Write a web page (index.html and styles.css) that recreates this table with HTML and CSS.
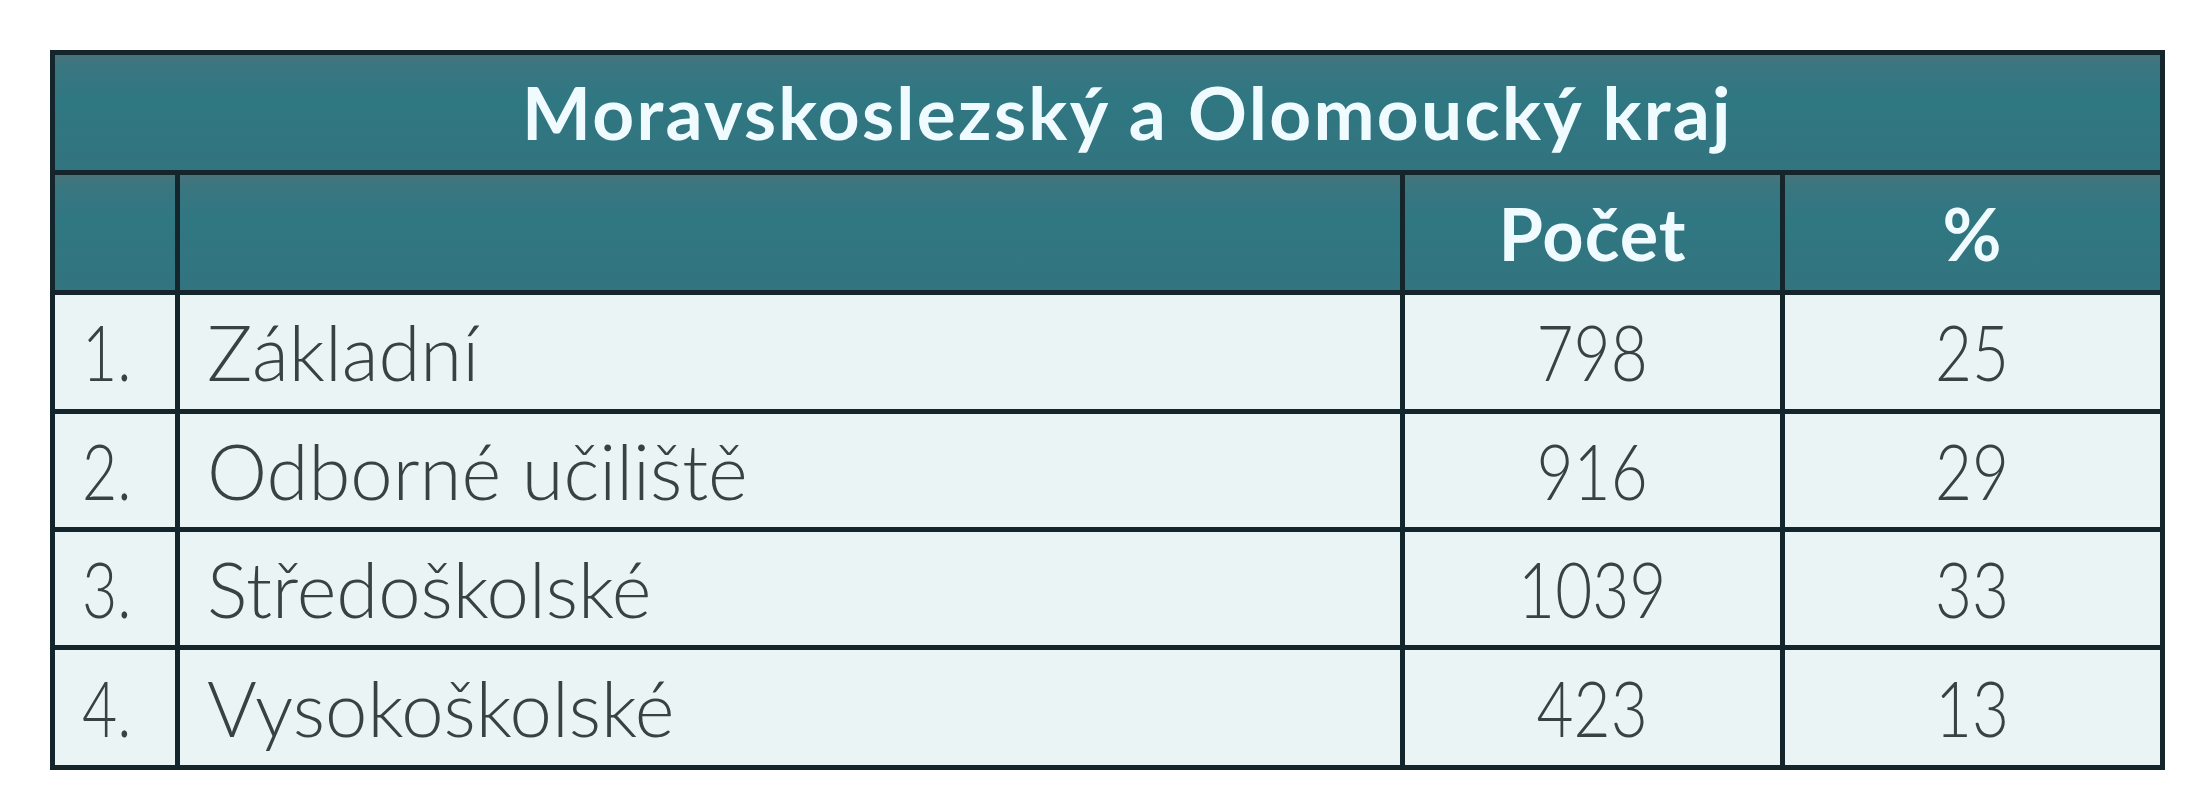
FILE: index.html
```html
<!DOCTYPE html>
<html lang="cs">
<head>
<meta charset="utf-8">
<title>Moravskoslezský a Olomoucký kraj</title>
<link rel="stylesheet" href="styles.css">
</head>
<body>
<div class="grid">
  <div class="cell head title">Moravskoslezský a Olomoucký kraj</div>
  <div class="cell head"></div>
  <div class="cell head"></div>
  <div class="cell head center">Počet</div>
  <div class="cell head center">%</div>

  <div class="cell"><span class="num idx">1.</span></div>
  <div class="cell">Základní</div>
  <div class="cell center"><span class="num">798</span></div>
  <div class="cell center"><span class="num">25</span></div>

  <div class="cell"><span class="num idx">2.</span></div>
  <div class="cell">Odborné učiliště</div>
  <div class="cell center"><span class="num">916</span></div>
  <div class="cell center"><span class="num">29</span></div>

  <div class="cell"><span class="num idx">3.</span></div>
  <div class="cell">Středoškolské</div>
  <div class="cell center"><span class="num">1039</span></div>
  <div class="cell center"><span class="num">33</span></div>

  <div class="cell"><span class="num idx">4.</span></div>
  <div class="cell">Vysokoškolské</div>
  <div class="cell center"><span class="num">423</span></div>
  <div class="cell center"><span class="num">13</span></div>
</div>
</body>
</html>
```

FILE: styles.css
```css
html, body {
  margin: 0;
  padding: 0;
  background: #ffffff;
}

body {
  padding: 50px 0 0 50px;
  font-family: "Lato", "Liberation Sans", sans-serif;
}

.grid {
  display: grid;
  grid-template-columns: 120px 1220px 375px 375px;
  grid-template-rows: 115px 115px 114px 113px 113px 115px;
  gap: 5px;
  padding: 5px;
  width: max-content;
  background: #14262c;
}

.cell {
  display: flex;
  align-items: center;
  padding-left: 27px;
  background: #ebf4f5;
  color: #384244;
  font-size: 76px;
  font-weight: 300;
  line-height: 1;
}

.cell.center {
  justify-content: center;
  padding-left: 0;
}

.num {
  display: inline-block;
  transform: scaleX(0.84);
}

.num.idx {
  transform-origin: left center;
  transform: scaleX(0.8);
}

.head {
  background: linear-gradient(#4a737a 0, #3a7680 10px, #2f7782 40%, #32747f 100%);
  color: #effbff;
  font-weight: 700;
  font-size: 72px;
  letter-spacing: 1px;
}

.title {
  grid-column: 1 / -1;
  justify-content: center;
  padding-left: 40px;
  font-size: 73px;
  letter-spacing: 2.3px;
}
```
